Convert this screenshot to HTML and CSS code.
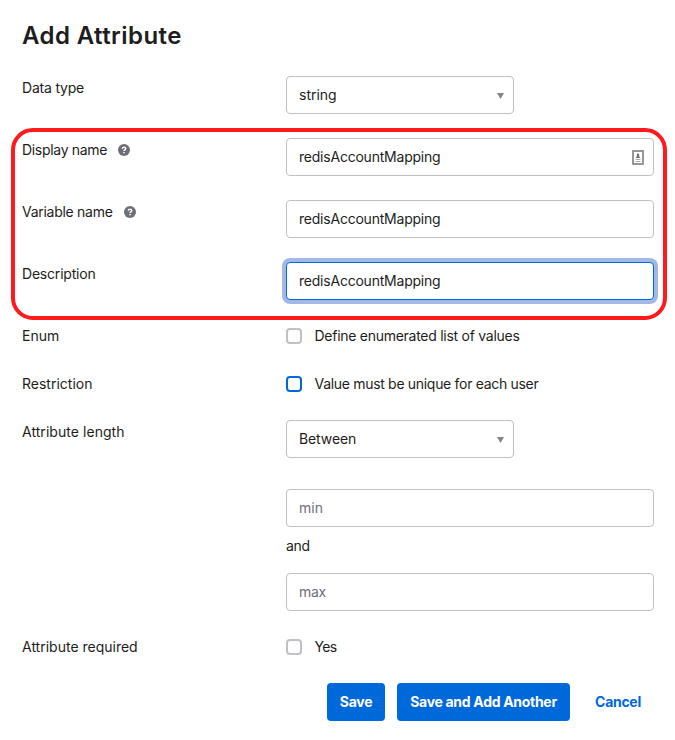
FILE: index.html
```html
<!DOCTYPE html>
<html lang="en">
<head>
<meta charset="utf-8">
<title>Add Attribute</title>
<link rel="stylesheet" href="styles.css">
</head>
<body>
<main class="dialog">
  <h1 class="title">Add Attribute</h1>
  <form class="form">
    <div class="row">
      <div class="label"><span class="t-type">Data type</span></div>
      <div class="select"><span class="t-string">string</span><svg class="caret" viewBox="0 0 7 6"><path d="M0 0h7L3.5 6z"/></svg></div>
    </div>
    <section class="highlight">
      <div class="row">
        <div class="label"><span class="t-display">Display name</span>
          <svg class="help" viewBox="0 0 12 12"><circle cx="6" cy="6" r="6"/><path d="M4.3 4.7C4.4 2.6 7.8 2.7 7.7 4.6 7.7 5.8 6.1 5.8 6.1 7M6.1 8v1.2"/></svg>
        </div>
        <div class="input"><span class="t-redis">redisAccountMapping</span>
          <svg class="contact" viewBox="0 0 12 15"><rect class="frame" x="1" y="1" width="10" height="13"/><path class="person" d="M6 3l1.2 1.5v2L8.5 8h-5l1.3-1.5v-2z"/><path class="lines" d="M3.5 9.5h5M3.5 11.5h5"/></svg>
        </div>
      </div>
      <div class="row">
        <div class="label"><span class="t-variable">Variable name</span>
          <svg class="help" viewBox="0 0 12 12"><circle cx="6" cy="6" r="6"/><path d="M4.3 4.7C4.4 2.6 7.8 2.7 7.7 4.6 7.7 5.8 6.1 5.8 6.1 7M6.1 8v1.2"/></svg>
        </div>
        <div class="input"><span class="t-redis">redisAccountMapping</span></div>
      </div>
      <div class="row">
        <div class="label"><span class="t-description">Description</span></div>
        <div class="input focused"><span class="t-redis">redisAccountMapping</span></div>
      </div>
    </section>
    <div class="row">
      <div class="label"><span class="t-enum">Enum</span></div>
      <div class="check"><span class="box"></span><span class="t-define">Define enumerated list of values</span></div>
    </div>
    <div class="row">
      <div class="label"><span class="t-restriction">Restriction</span></div>
      <div class="check"><span class="box active"></span><span class="t-unique">Value must be unique for each user</span></div>
    </div>
    <div class="row">
      <div class="label"><span class="t-length">Attribute length</span></div>
      <div class="range">
        <div class="select"><span class="t-between">Between</span><svg class="caret" viewBox="0 0 7 6"><path d="M0 0h7L3.5 6z"/></svg></div>
        <div class="input min"><span class="t-min">min</span></div>
        <div class="and"><span class="t-and">and</span></div>
        <div class="input max"><span class="t-max">max</span></div>
      </div>
    </div>
    <div class="row">
      <div class="label"><span class="t-required">Attribute required</span></div>
      <div class="check"><span class="box"></span><span class="t-yes">Yes</span></div>
    </div>
    <div class="actions">
      <button type="button" class="button save">Save</button>
      <button type="button" class="button another">Save and Add Another</button>
      <button type="button" class="button cancel">Cancel</button>
    </div>
  </form>
</main>
</body>
</html>
```
FILE: styles.css
```css
* { box-sizing: border-box; }
body { margin: 0; background: #fff; color: #1d1d21; font: 14px/24px Inter, "Liberation Sans", sans-serif; }
.dialog { padding: 20px 21px 19px 22px; }
.title { margin: 0 0 24px; font-size: 24px; line-height: 32px; font-weight: 600; letter-spacing: .42px; }
.form, .highlight { display: flex; flex-direction: column; gap: 24px; }
.highlight { position: relative; }
.highlight::after { content: ""; position: absolute; top: -10px; bottom: -20px; left: -11px; right: -13px; border: 4px solid #ff1a1d; border-radius: 22px; pointer-events: none; }
.row { display: grid; grid-template-columns: 264px 368px; align-items: start; }
.label { display: flex; align-items: center; gap: 11px; height: 24px; white-space: nowrap; }
.help { width: 12px; height: 12px; fill: #6e6e78; }
.help path { fill: none; stroke: #fff; stroke-width: 1.5; }
.input, .select { display: flex; align-items: center; justify-content: space-between; height: 38px; padding: 0 9px 0 12px; border: 1px solid #bfbfc6; border-radius: 4px; background: #fff; }
.select { width: 228px; }
.caret { width: 7px; height: 6px; margin-top: 2px; fill: #85858a; }
.focused { border-color: #0069d9; box-shadow: 0 0 0 4px #a3b7e9; }
.contact { width: 12px; height: 15px; }
.frame { fill: #fff; stroke: #858585; stroke-width: 1.7; }
.person { fill: #707070; }
.lines { stroke: #aaa; fill: none; }
.check { display: flex; align-items: center; gap: 12.5px; height: 24px; }
.box { width: 16px; height: 16px; border: 2px solid #bfbfc6; border-radius: 4px; }
.active { border-color: #0069d9; }
.min { margin-top: 31px; }
.and { margin-top: 7px; }
.max { margin-top: 15px; }
.t-min, .t-max { color: #6e6e78; }
.t-type { letter-spacing: -.2px; }
.t-display { letter-spacing: -.31px; }
.t-variable { letter-spacing: -.28px; }
.t-description { letter-spacing: -.2px; }
.t-length { letter-spacing: .05px; }
.t-redis { letter-spacing: -.22px; }
.t-define { letter-spacing: -.27px; }
.t-unique { letter-spacing: -.31px; }
.t-between { letter-spacing: -.1px; }
.t-max { letter-spacing: -.3px; }
.t-and { letter-spacing: -.3px; }
.t-yes { letter-spacing: -.7px; }
.actions { display: flex; gap: 12px; padding-left: 305px; }
.button { height: 38px; padding: 0; border: 0; border-radius: 4px; background: #0069d9; color: #fff; font: 700 14px/24px Inter, "Liberation Sans", sans-serif; letter-spacing: -.3px; white-space: nowrap; }
.save { width: 58px; }
.another { width: 173px; }
.cancel { width: 72px; background: transparent; color: #0069d9; }
```
